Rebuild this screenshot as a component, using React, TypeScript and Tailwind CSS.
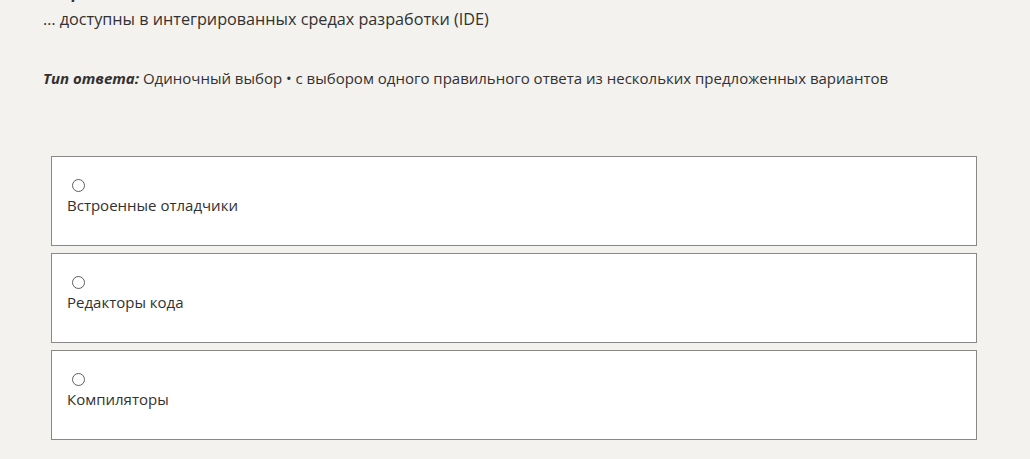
import React from 'react';

const options = ['Встроенные отладчики', 'Редакторы кода', 'Компиляторы'];

const App: React.FC = () => {
  return (
    <div
      className="min-h-screen w-full bg-[#f3f2ef] text-[#323130] overflow-hidden"
      style={{ fontFamily: '"Open Sans", "Noto Sans", sans-serif' }}
    >
      <div className="pl-[43px] pr-[53px]">
        <div className="mt-[-14px] h-[22px] text-[16px] font-bold italic leading-[12px] text-[#323130]">
          Вопрос
        </div>
        <div className="text-[16.2px] leading-[22px]">
          … доступны в интегрированных средах разработки (IDE)
        </div>
        <div className="mt-[37px] text-[15px] leading-[22px]">
          <span className="font-bold italic">Тип ответа:</span> Одиночный выбор • с выбором одного правильного ответа из нескольких предложенных вариантов
        </div>
        <div className="mt-[67px] ml-[8px] flex flex-col gap-[7px]">
          {options.map((o) => (
            <div
              key={o}
              className="h-[90px] border border-[#8a8886] bg-white px-[15px] pt-[22px]"
            >
              <div className="ml-[5px] h-[13px] w-[13px] rounded-full border border-[#605e5c] bg-white" />
              <div className="mt-[2px] text-[15px] leading-[22px]">{o}</div>
            </div>
          ))}
        </div>
      </div>
    </div>
  );
};

export default App;
